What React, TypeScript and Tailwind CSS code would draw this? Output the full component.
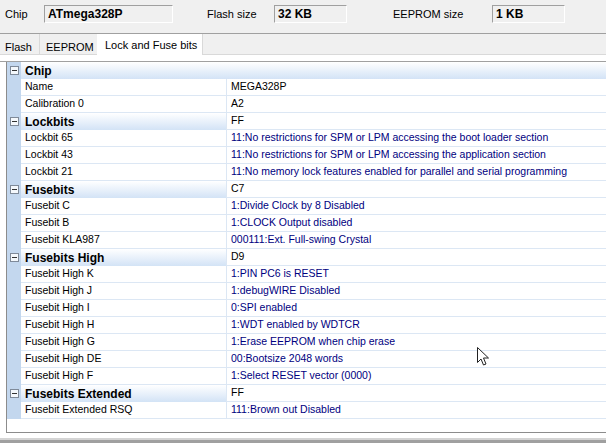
import React from "react";

type Row =
  | { kind: "cat"; label: string; value?: string }
  | { kind: "item"; label: string; value: string; blue?: boolean };

const rows: Row[] = [
  { kind: "cat", label: "Chip" },
  { kind: "item", label: "Name", value: "MEGA328P" },
  { kind: "item", label: "Calibration 0", value: "A2" },
  { kind: "cat", label: "Lockbits", value: "FF" },
  { kind: "item", label: "Lockbit 65", value: "11:No restrictions for SPM or LPM accessing the boot loader section", blue: true },
  { kind: "item", label: "Lockbit 43", value: "11:No restrictions for SPM or LPM accessing the application section", blue: true },
  { kind: "item", label: "Lockbit 21", value: "11:No memory lock features enabled for parallel and serial programming", blue: true },
  { kind: "cat", label: "Fusebits", value: "C7" },
  { kind: "item", label: "Fusebit C", value: "1:Divide Clock by 8 Disabled", blue: true },
  { kind: "item", label: "Fusebit B", value: "1:CLOCK Output disabled", blue: true },
  { kind: "item", label: "Fusebit KLA987", value: "000111:Ext. Full-swing Crystal", blue: true },
  { kind: "cat", label: "Fusebits High", value: "D9" },
  { kind: "item", label: "Fusebit High K", value: "1:PIN PC6 is RESET", blue: true },
  { kind: "item", label: "Fusebit High J", value: "1:debugWIRE Disabled", blue: true },
  { kind: "item", label: "Fusebit High I", value: "0:SPI enabled", blue: true },
  { kind: "item", label: "Fusebit High H", value: "1:WDT enabled by WDTCR", blue: true },
  { kind: "item", label: "Fusebit High G", value: "1:Erase EEPROM when chip erase", blue: true },
  { kind: "item", label: "Fusebit High DE", value: "00:Bootsize 2048 words", blue: true },
  { kind: "item", label: "Fusebit High F", value: "1:Select RESET vector (0000)", blue: true },
  { kind: "cat", label: "Fusebits Extended", value: "FF" },
  { kind: "item", label: "Fusebit Extended RSQ", value: "111:Brown out Disabled", blue: true },
];

function InfoBox({ text, width }: { text: string; width: string }) {
  return (
    <div
      className={`${width} h-[18px] flex items-center pl-[3px] border border-t-[#a0a0a0] border-l-[#a0a0a0] border-b-white border-r-white font-bold text-[12px] text-black`}
    >
      {text}
    </div>
  );
}

function MinusBox() {
  return (
    <div className="w-[9px] h-[9px] border border-[#7f8a99] bg-[#f4f8fc] flex items-center justify-center">
      <div className="w-[5px] h-px bg-[#333]" />
    </div>
  );
}

function Cursor() {
  return (
    <svg
      className="absolute left-[477px] top-[347px]"
      width="13"
      height="20"
      viewBox="0 0 13 20"
    >
      <path
        d="M0.5 0.5 L0.5 15.5 L4 12 L6.5 18 L9 17 L6.5 11 L11.5 11 Z"
        fill="white"
        stroke="#222"
        strokeWidth="1"
        strokeLinejoin="miter"
      />
    </svg>
  );
}

export default function App() {
  return (
    <div
      className="relative w-[606px] h-[443px] overflow-hidden bg-[#f0f0f0] text-[10.5px] text-black"
      style={{ fontFamily: '"Liberation Sans", Arial, sans-serif' }}
    >
      {/* header */}
      <div className="h-[34px] border-b border-[#a0a0a0] flex items-start pt-[5px] text-[11px]">
        <span className="w-[44px] pl-[5px] leading-[18px]">Chip</span>
        <InfoBox text="ATmega328P" width="w-[129px]" />
        <span className="ml-[34px] w-[67px] leading-[18px]">Flash size</span>
        <InfoBox text="32 KB" width="w-[73px]" />
        <span className="ml-[46px] w-[99px] leading-[18px]">EEPROM size</span>
        <InfoBox text="1 KB" width="w-[73px]" />
      </div>

      {/* tabs */}
      <div className="h-[21px] flex items-stretch border-b border-[#d9d9d9] text-[11px] whitespace-nowrap">
        <div className="w-[40px] pl-[5px] pt-[5px] border-r border-[#d9d9d9]">Flash</div>
        <div className="w-[57px] pl-[6px] pt-[5px]">EEPROM</div>
        <div className="w-[106px] h-[21px] pl-[8px] pt-[3px] bg-white border-r border-[#d9d9d9]">
          Lock and Fuse bits
        </div>
      </div>

      {/* page */}
      <div className="h-[383px] bg-white pt-[6px]">
        <div className="h-[372px] border-t border-[#a0a0a0] pl-[6px] flex">
          <div className="flex-1 border-l border-b border-[#8c8c8c] flex flex-col">
            {rows.map((r, i) =>
              r.kind === "cat" ? (
                <div key={i} className="h-[17px] flex">
                  <div className="w-[14px] bg-[#c3d7ee] flex items-center justify-center">
                    <MinusBox />
                  </div>
                  {r.value === undefined ? (
                    <div className="flex-1 flex items-center pl-[4px] font-bold text-[12px] bg-gradient-to-b from-white to-[#d3e3f6]">
                      {r.label}
                    </div>
                  ) : (
                    <>
                      <div className="w-[206px] flex items-center pl-[4px] font-bold text-[12px] bg-gradient-to-b from-white to-[#d3e3f6] border-r border-[#dce7f4]">
                        {r.label}
                      </div>
                      <div className="flex-1 flex items-center pl-[4px] border-b border-[#dce7f4]">
                        {r.value}
                      </div>
                    </>
                  )}
                </div>
              ) : (
                <div key={i} className="h-[17px] flex">
                  <div className="w-[14px] bg-[#c3d7ee]" />
                  <div className="w-[206px] flex items-center pl-[4px] border-b border-r border-[#dce7f4]">
                    {r.label}
                  </div>
                  <div
                    className={`flex-1 flex items-center pl-[4px] border-b border-[#dce7f4] whitespace-nowrap ${
                      r.blue ? "text-[#000080]" : "text-black"
                    }`}
                  >
                    {r.value}
                  </div>
                </div>
              )
            )}
          </div>
        </div>
      </div>

      {/* bottom */}
      <div className="h-[2px] bg-[#d4d4d4]" />
      <div className="h-[4px] bg-[#a0a0a0]" />

      <Cursor />
    </div>
  );
}
